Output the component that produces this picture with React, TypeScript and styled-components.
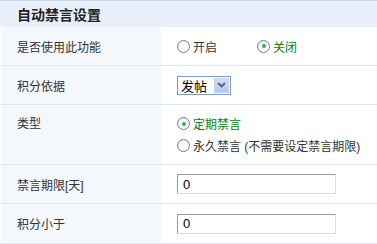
import React from "react";
import styled, { createGlobalStyle } from "styled-components";

const GlobalStyle = createGlobalStyle`
  body {
    margin: 0;
    background: #fff;
    font-family: "Liberation Sans", "Noto Sans CJK SC", sans-serif;
    font-size: 12px;
    color: #333;
  }
`;

const Panel = styled.div`
  width: 377px;
  border-top: 1px solid #c9d8ea;
`;

const Header = styled.div`
  height: 26px;
  background: #e9f0f9;
  display: flex;
  align-items: center;
  padding-left: 17px;
  font-size: 14px;
  font-weight: bold;
  color: #222;
`;

const Row = styled.div<{ $h?: number }>`
  display: grid;
  grid-template-columns: 161px 1fr;
  height: ${p => p.$h ?? 38}px;
  border-bottom: 1px solid #dfe7f1;
`;

const Label = styled.div<{ $top?: boolean }>`
  background: #f4f7fc;
  border-left: 2px solid #fafcfe;
  padding-left: 15px;
  display: flex;
  align-items: ${p => (p.$top ? "flex-start" : "center")};
  padding-top: ${p => (p.$top ? 9 : 0)}px;
  box-sizing: border-box;
`;

const Field = styled.div<{ $column?: boolean }>`
  display: flex;
  flex-direction: ${p => (p.$column ? "column" : "row")};
  align-items: ${p => (p.$column ? "flex-start" : "center")};
  padding-left: 16px;
  padding-top: ${p => (p.$column ? 10 : 0)}px;
  gap: ${p => (p.$column ? 5 : 0)}px;
`;

const Option = styled.label<{ $checked?: boolean; $wide?: boolean }>`
  display: inline-flex;
  align-items: center;
  gap: 3px;
  width: ${p => (p.$wide ? "80px" : "auto")};
  color: ${p => (p.$checked ? "#0b7d0b" : "#333")};
`;

const Dot = styled.span<{ $checked?: boolean }>`
  width: 11px;
  height: 11px;
  border-radius: 50%;
  border: 1px solid #6f7f92;
  background: radial-gradient(circle at 60% 65%, #ffffff 30%, #dfe3e8 100%);
  display: inline-flex;
  align-items: center;
  justify-content: center;
  &::after {
    content: "";
    width: 4px;
    height: 4px;
    border-radius: 50%;
    background: ${p => (p.$checked ? "#33b333" : "transparent")};
  }
`;

const Select = styled.div`
  display: flex;
  align-items: center;
  width: 48px;
  height: 17px;
  border: 1px solid #7f9db9;
  background: #fff;
  padding: 0 1px 0 3px;
  font-size: 13px;
  color: #000;
`;

const SelectText = styled.span`
  flex: 1;
`;

const Arrow = styled.span`
  width: 15px;
  height: 15px;
  background: linear-gradient(#d3def8, #b6c8f0);
  border: 1px solid #c2d0ee;
  box-sizing: border-box;
  display: flex;
  align-items: center;
  justify-content: center;
`;

const Input = styled.div`
  width: 159px;
  height: 20px;
  box-sizing: border-box;
  border: 1px solid #dcdcdc;
  border-top-color: #9a9a9a;
  border-left-color: #9a9a9a;
  padding-left: 5px;
  display: flex;
  align-items: center;
  font-size: 13px;
  color: #000;
`;

const Radio = ({ checked, wide, children }: { checked?: boolean; wide?: boolean; children: React.ReactNode }) => (
  <Option $checked={checked} $wide={wide}>
    <Dot $checked={checked} />
    {children}
  </Option>
);

export default function App() {
  return (
    <>
      <GlobalStyle />
      <Panel>
        <Header>自动禁言设置</Header>
        <Row>
          <Label>是否使用此功能</Label>
          <Field>
            <Radio wide>开启</Radio>
            <Radio checked>关闭</Radio>
          </Field>
        </Row>
        <Row>
          <Label>积分依据</Label>
          <Field>
            <Select>
              <SelectText>发帖</SelectText>
              <Arrow>
                <svg width="9" height="6" viewBox="0 0 9 6">
                  <path d="M1 1 L4.5 4.5 L8 1" fill="none" stroke="#4d6185" strokeWidth="1.8" />
                </svg>
              </Arrow>
            </Select>
          </Field>
        </Row>
        <Row $h={59}>
          <Label $top>类型</Label>
          <Field $column>
            <Radio checked>定期禁言</Radio>
            <Radio>永久禁言 (不需要设定禁言期限)</Radio>
          </Field>
        </Row>
        <Row>
          <Label>禁言期限[天]</Label>
          <Field>
            <Input>0</Input>
          </Field>
        </Row>
        <Row $h={39}>
          <Label>积分小于</Label>
          <Field>
            <Input>0</Input>
          </Field>
        </Row>
      </Panel>
    </>
  );
}
